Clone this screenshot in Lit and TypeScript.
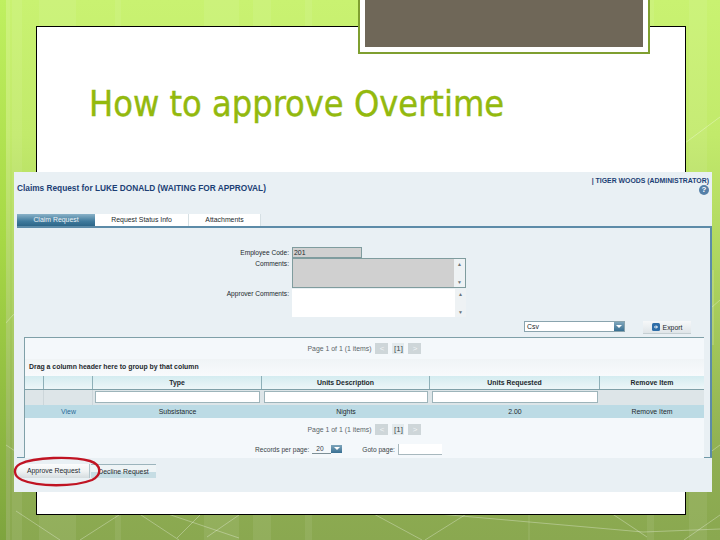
import { LitElement, html, css, svg } from 'lit';
import { customElement } from 'lit/decorators.js';

const strips = [[6, 4], [12, 10], [39, 37], [115, 6], [204, 35], [253, 18], [305, 7], [528, 2], [647, 7], [689, 18]];
const lines = [
  '0,441 36,465', '5,365 5,324 13,315 36,300', '16,511 60,540', '119,515 80,540', '138,513 179,540',
  '239,515 207,537', '165,513 239,538', '202,513 177,538', '372,513 422,540', '468,513 425,540',
  '427,513 643,532 720,529', '611,513 647,537', '720,515 684,540', '685,143 720,117',
  '686,330 720,300', '713,270 713,345', '686,470 720,445',
];

@customElement('grid-pager')
class GridPager extends LitElement {
  static properties = { label: { type: String }, current: { type: String } };
  label = '';
  current = '';

  static styles = css`
    :host {
      display: flex;
      align-items: center;
      justify-content: center;
      gap: 4px;
      height: 100%;
      color: #5a6468;
    }
    .btn {
      width: 13px;
      height: 11px;
      background: #ced6d9;
      color: #f2f5f6;
      font-size: 8px;
      line-height: 11px;
      text-align: center;
    }
    .num {
      width: 12px;
      background: #e3eaed;
      color: #404a50;
    }
  `;

  render() {
    return html`
      <span>${this.label}</span>
      <span class="btn">&lt;</span>
      <span class="btn num">${this.current}</span>
      <span class="btn">&gt;</span>
    `;
  }
}

@customElement('app-root')
class AppRoot extends LitElement {
  static styles = css`
    :host {
      display: block;
      position: relative;
      width: 720px;
      height: 540px;
      overflow: hidden;
      font-family: 'Liberation Sans', Arial, sans-serif;
      font-size: 6.9px;
      color: #23292d;
      background: linear-gradient(180deg, #c9f271 0%, #c2ea6b 25%, #a9cf5c 55%, #8fae52 85%, #8aa850 100%);
    }
    .decor {
      position: absolute;
      inset: 0;
    }
    .edge {
      position: absolute;
      left: 0;
      top: 0;
      width: 6px;
      height: 540px;
      background: linear-gradient(180deg, #bff060 0%, #a6d845 45%, #7ea43e 100%);
    }
    .slide {
      box-sizing: border-box;
      width: 650px;
      height: 489px;
      margin: 26px 0 0 36px;
      padding: 55px 0 0 52px;
      background: #fff;
      border: 1px solid #000;
      position: relative;
    }
    .title {
      margin: 0;
      font-family: 'DejaVu Sans', sans-serif;
      font-stretch: condensed;
      font-size: 35.8px;
      font-weight: 400;
      line-height: 44px;
      white-space: nowrap;
      color: #93b90e;
      -webkit-text-stroke: 0.4px #93b90e;
    }
    .plate-wrap {
      position: absolute;
      left: 358px;
      top: 0;
      box-sizing: border-box;
      width: 292px;
      height: 54px;
      padding: 0 5px 5px;
      background: #fff;
      border: 2px solid #7f9f30;
      border-top: none;
    }
    .plate-fill {
      height: 100%;
      background: #6f6758;
    }

    /* screenshot pasted over the slide */
    .panel {
      position: absolute;
      left: 14px;
      top: 172px;
      box-sizing: border-box;
      width: 698px;
      height: 320px;
      background: #e9f0f4;
    }
    .head {
      display: flex;
      justify-content: space-between;
      height: 42px;
      padding: 4px 3px 0;
      box-sizing: border-box;
    }
    .claim {
      margin-top: 7px;
      font-size: 8.3px;
      font-weight: 700;
      color: #1c3f74;
      white-space: nowrap;
    }
    .who {
      display: flex;
      flex-direction: column;
      align-items: flex-end;
      font-weight: 700;
      line-height: 9px;
      color: #1c3f74;
      white-space: nowrap;
    }
    .help {
      width: 10px;
      height: 10px;
      border-radius: 50%;
      background: #5580a8;
      color: #fff;
      font-size: 8px;
      line-height: 10px;
      text-align: center;
    }
    .tabs {
      display: flex;
      height: 12px;
      margin-left: 3px;
    }
    .tab {
      height: 12px;
      background: #fff;
      line-height: 12px;
      text-align: center;
      border-right: 1px solid #d6e0e4;
      box-sizing: border-box;
    }
    .tab.on {
      background: linear-gradient(180deg, #8ab2c8 0%, #3f7a9c 60%, #2d6688 100%);
      color: #eef4f7;
      border-right: none;
    }
    .tabbox {
      box-sizing: border-box;
      height: 232px;
      margin-left: 3px;
      border-top: 2px solid #5c8ba8;
      border-right: 2px solid #5c8ba8;
      border-bottom: 1px solid #6f98a8;
    }
    .form {
      display: grid;
      grid-template-columns: 272px 174px;
      grid-template-rows: 11px 30px 28px;
      column-gap: 3px;
      box-sizing: border-box;
      height: 93px;
      padding-top: 19px;
    }
    .lbl {
      font-size: 6.6px;
      text-align: right;
      line-height: 11px;
    }
    .code {
      box-sizing: border-box;
      width: 70px;
      height: 11px;
      padding-left: 1px;
      line-height: 10px;
      background: #d0d0d0;
      border: 1px solid #7f9c9e;
    }
    .area {
      display: flex;
      justify-content: flex-end;
      box-sizing: border-box;
      background: #d0d0d0;
    }
    .area.ro {
      border: 1px solid #7f9c9e;
    }
    .area.edit {
      height: 28px;
      margin-top: 1px;
      background: #fff;
    }
    .scroll {
      display: flex;
      flex-direction: column;
      justify-content: space-between;
      width: 11px;
      padding: 2px 0;
      box-sizing: border-box;
      background: #eef2f4;
      color: #6a7478;
      font-size: 5px;
      line-height: 6px;
      text-align: center;
    }
    .tools {
      display: flex;
      justify-content: flex-end;
      gap: 18px;
      height: 16px;
      padding-right: 19px;
    }
    .select {
      display: flex;
      justify-content: space-between;
      box-sizing: border-box;
      width: 101px;
      height: 11px;
      padding-left: 2px;
      line-height: 10px;
      background: #fff;
      border: 1px solid #8aa4ae;
    }
    .drop {
      position: relative;
      width: 10px;
      height: 100%;
      background: linear-gradient(180deg, #7fa6bc 0%, #386f92 100%);
    }
    .drop::after {
      content: '';
      position: absolute;
      left: 2px;
      top: 3px;
      border-left: 3px solid transparent;
      border-right: 3px solid transparent;
      border-top: 3px solid #fff;
    }
    .export {
      display: flex;
      align-items: center;
      justify-content: center;
      gap: 3px;
      box-sizing: border-box;
      width: 48px;
      height: 13px;
      background: linear-gradient(180deg, #f6f8f9 0%, #dfe5e8 100%);
      border-bottom: 1px solid #c4ced2;
    }
    .grid {
      box-sizing: border-box;
      width: 680px;
      height: 121px;
      margin-left: 7px;
      display: grid;
      grid-template-rows: 21px 17px 14px 15px 13px 22px 18px;
      background: #f4f8fb;
      border-top: 1px solid #7fa0a8;
      border-left: 1px solid #7fa0a8;
    }
    .group {
      padding-left: 4px;
      line-height: 16px;
      font-weight: 700;
      background: linear-gradient(180deg, #f0f4f6 0%, #f8fafc 100%);
    }
    .row {
      display: grid;
      grid-template-columns: 19px 49px 169px 168px 170px 104px;
      text-align: center;
    }
    .row.hd {
      font-weight: 700;
      line-height: 13px;
      background: linear-gradient(180deg, #d4ecf0 0%, #edf6f8 100%);
      border-bottom: 1px solid #7fa0a8;
    }
    .row.hd > span {
      border-right: 1px solid #8eb0b8;
    }
    .row.hd > span:last-child {
      border-right: none;
    }
    .row.filter {
      background: #dde5e8;
    }
    .row.filter > span {
      padding: 1px 2px;
      box-sizing: border-box;
    }
    .row.filter > span:nth-child(-n + 2) {
      border-right: 1px solid #ccd6da;
    }
    .row.filter i {
      display: block;
      box-sizing: border-box;
      height: 12px;
      background: #fff;
      border: 1px solid #9db4ba;
    }
    .row.data {
      line-height: 13px;
      background: #bcdbe5;
    }
    .row.data a {
      color: #2b6a98;
    }
    .records {
      display: flex;
      align-items: center;
      padding-left: 230px;
      font-size: 6.6px;
      color: #3a4448;
    }
    .per {
      box-sizing: border-box;
      width: 19px;
      margin-left: 3px;
      padding-left: 4px;
      line-height: 9px;
      border-bottom: 1px solid #7d8f96;
    }
    .drop.small {
      width: 11px;
      height: 8px;
      margin-right: 20px;
    }
    .drop.small::after {
      top: 2px;
      left: 3px;
    }
    .goto {
      box-sizing: border-box;
      width: 44px;
      height: 11px;
      margin-left: 3px;
      background: #fff;
      border-left: 1px solid #a8b8be;
      border-bottom: 1px solid #a8b8be;
    }
    .actions {
      display: flex;
      gap: 1px;
      margin: 6px 0 0 4px;
    }
    .action {
      box-sizing: border-box;
      height: 14px;
      line-height: 13px;
      text-align: center;
    }
    .approve {
      width: 72px;
      background: linear-gradient(180deg, #fbfcfc 0%, #f0f3f4 50%, #d5dcdf 100%);
      border-right: 1px solid #b4c6cc;
    }
    .decline {
      width: 65px;
      background: linear-gradient(180deg, #eef4f6 0 50%, #c6dde4 50% 100%);
      border-top: 1px solid #9cb4bc;
    }
    .ring {
      position: absolute;
      left: 12px;
      top: 456px;
    }
  `;

  render() {
    return html`
      <svg class="decor" width="720" height="540" viewBox="0 0 720 540">
        ${strips.map(([x, w]) => svg`<rect x=${x} y="0" width=${w} height="540" fill="#fff" opacity="0.07"></rect>`)}
        ${lines.map((p) => svg`<polyline points=${p} fill="none" stroke="#fff" stroke-opacity="0.3" stroke-width="1"></polyline>`)}
      </svg>
      <div class="edge"></div>
      <div class="slide">
        <h1 class="title">How to approve Overtime</h1>
      </div>
      <div class="plate-wrap"><div class="plate-fill"></div></div>
      <div class="panel">
        <div class="head">
          <span class="claim">Claims Request for LUKE DONALD (WAITING FOR APPROVAL)</span>
          <div class="who">
            <span>| TIGER WOODS (ADMINISTRATOR)</span>
            <span class="help">?</span>
          </div>
        </div>
        <div class="tabs">
          <span class="tab on" style="width:78px">Claim Request</span>
          <span class="tab" style="width:94px">Request Status Info</span>
          <span class="tab" style="width:72px">Attachments</span>
        </div>
        <div class="tabbox">
          <div class="form">
            <span class="lbl">Employee Code:</span>
            <div class="code">201</div>
            <span class="lbl">Comments:</span>
            <div class="area ro"><div class="scroll"><span>▲</span><span>▼</span></div></div>
            <span class="lbl">Approver Comments:</span>
            <div class="area edit"><div class="scroll"><span>▲</span><span>▼</span></div></div>
          </div>
          <div class="tools">
            <div class="select">Csv<span class="drop"></span></div>
            <div class="export">
              <svg width="8" height="8" viewBox="0 0 8 8">
                <rect width="8" height="8" rx="1.5" fill="#2f6ea8"></rect>
                <path d="M2 4h3M4 2.5 5.5 4 4 5.5" fill="none" stroke="#fff" stroke-width="1"></path>
              </svg>
              Export
            </div>
          </div>
          <div class="grid">
            <grid-pager label="Page 1 of 1 (1 items)" current="[1]"></grid-pager>
            <div class="group">Drag a column header here to group by that column</div>
            <div class="row hd">
              <span></span><span></span><span>Type</span><span>Units Description</span><span>Units Requested</span><span>Remove Item</span>
            </div>
            <div class="row filter">
              <span></span><span></span><span><i></i></span><span><i></i></span><span><i></i></span><span></span>
            </div>
            <div class="row data">
              <span></span><a>View</a><span>Subsistance</span><span>Nights</span><span>2.00</span><span>Remove Item</span>
            </div>
            <grid-pager label="Page 1 of 1 (1 items)" current="[1]"></grid-pager>
            <div class="records">
              Records per page:
              <span class="per">20</span><span class="drop small"></span>
              Goto page:
              <span class="goto"></span>
            </div>
          </div>
        </div>
        <div class="actions">
          <span class="action approve">Approve Request</span>
          <span class="action decline">Decline Request</span>
        </div>
      </div>
      <svg class="ring" width="92" height="32" viewBox="0 0 92 32">
        <path d="M8 8 C22 1 60 0 78 5 C90 9 90 19 80 24 C62 31 26 31 10 24 C1 20 1 12 8 8 Z" fill="none" stroke="#c01423" stroke-width="2.4"></path>
      </svg>
    `;
  }
}
